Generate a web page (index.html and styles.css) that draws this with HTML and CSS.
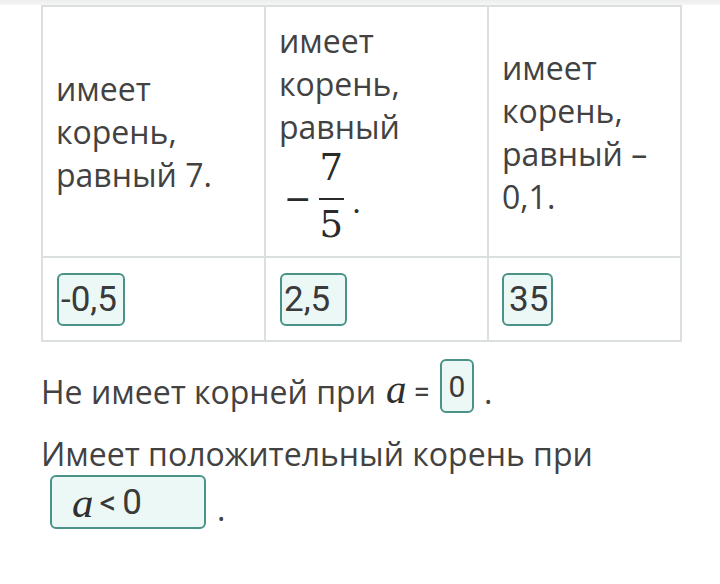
FILE: index.html
```html
<!DOCTYPE html>
<html lang="ru">
<head>
<meta charset="utf-8">
<title>Уравнение</title>
<link rel="stylesheet" href="styles.css">
</head>
<body>
<div class="topstrip"></div>
<main class="page">
  <table class="grid">
    <colgroup>
      <col class="c1"><col class="c2"><col class="c3">
    </colgroup>
    <tr class="row-q">
      <td>имеет корень, равный 7.</td>
      <td>
        <div>имеет корень, равный</div>
        <div class="fracline">
          <span class="minus">−</span>
          <span class="frac"><span class="num">7</span><span class="bar"></span><span class="den">5</span></span>
          <span class="fdot">.</span>
        </div>
      </td>
      <td>имеет корень, равный – 0,1.</td>
    </tr>
    <tr class="row-a">
      <td><span class="ans w1">-0,5</span></td>
      <td><span class="ans w2">2,5</span></td>
      <td><span class="ans w3">35</span></td>
    </tr>
  </table>

  <div class="line1">
    <span class="t">Не имеет корней при</span>
    <span class="var va">a</span>
    <span class="eq">=</span>
    <span class="ans small">0</span>
    <span class="t tdot">.</span>
  </div>
  <p class="line2">Имеет положительный корень при</p>
  <div class="line3">
    <span class="ans wide"><span class="var">a</span><span class="lt">&lt;</span><span class="zero">0</span></span>
    <span class="t tdot2">.</span>
  </div>
</main>
</body>
</html>
```
FILE: styles.css
```css
html, body {
  margin: 0;
  padding: 0;
  background: #ffffff;
}
body {
  font-family: "Open Sans", "Noto Sans", sans-serif;
  color: #424242;
  width: 720px;
  height: 584px;
  overflow: hidden;
}
.topstrip {
  height: 5px;
  background: linear-gradient(#ededed, #f6f6f6);
}
.page {
  padding: 0 0 0 41px;
}
.grid {
  border-collapse: collapse;
  table-layout: fixed;
  width: 639px;
}
.c1 { width: 223px; }
.c2 { width: 223px; }
.c3 { width: 193px; }
.grid td {
  border: 2px solid #dcdfdf;
  vertical-align: middle;
  padding: 0 8px 0 13px;
  font-size: 32px;
  line-height: 43px;
}
.row-q td { height: 249px; }
.row-a td { height: 82px; padding-left: 14px; }
.grid td:nth-child(3) { padding-left: 13px; }

.fracline {
  display: flex;
  align-items: center;
  padding-left: 5px;
  font-family: "DejaVu Serif", "Liberation Serif", serif;
  color: #2a2a2a;
}
.minus {
  font-size: 33px;
  line-height: 40px;
  margin-right: 7px;
  margin-top: 5px;
}
.frac {
  display: flex;
  flex-direction: column;
  align-items: center;
  font-size: 37px;
  line-height: 40px;
  width: 25px;
}
.bar {
  width: 25px;
  height: 2px;
  background: #2a2a2a;
  margin: 10px 0 5px;
}
.fdot {
  font-size: 30px;
  line-height: 40px;
  margin-left: 8px;
  margin-top: 14px;
}

.ans {
  display: inline-flex;
  align-items: center;
  box-sizing: border-box;
  height: 53px;
  border: 2px solid #4b9389;
  border-radius: 6px;
  background: #ebf8f5;
  font-family: Roboto, "Liberation Sans", sans-serif;
  color: #3a3a3a;
  font-size: 35px;
  padding: 0 2px;
  vertical-align: middle;
}
.w1 { width: 68px; }
.w2 { width: 67px; }
.w3 { width: 51px; padding-left: 5px; }

.line1 {
  display: flex;
  align-items: flex-start;
  height: 54px;
  margin-top: 17px;
  font-size: 32px;
  line-height: 43px;
  white-space: nowrap;
}
.t {
  margin-top: 11px;
}
.var {
  font-family: "Liberation Serif", "DejaVu Serif", serif;
  font-style: italic;
  font-size: 41px;
  color: #2f2f2f;
}
.va {
  margin: 9px 0 0 10px;
  line-height: 43px;
}
.eq {
  font-family: Roboto, "Liberation Sans", sans-serif;
  font-size: 30px;
  margin: 11px 10px 0 7px;
}
.ans.small {
  width: 34px;
  height: 54px;
  font-size: 30px;
  justify-content: center;
  padding: 0;
}
.tdot {
  margin-left: 10px;
}
.line2 {
  margin: 19px 0 0;
  font-size: 32px;
  line-height: 43px;
  white-space: nowrap;
}
.line3 {
  display: flex;
  align-items: flex-start;
  font-size: 32px;
  line-height: 43px;
}
.ans.wide {
  width: 156px;
  height: 54px;
  margin-left: 9px;
  padding-left: 20px;
  font-size: 35px;
}
.ans.wide .var {
  font-size: 43px;
}
.lt {
  margin: 0 6px 0 6px;
  font-size: 33px;
}
.zero {
  font-size: 35px;
}
.tdot2 {
  margin-left: 11px;
  margin-top: 12px;
}
```
